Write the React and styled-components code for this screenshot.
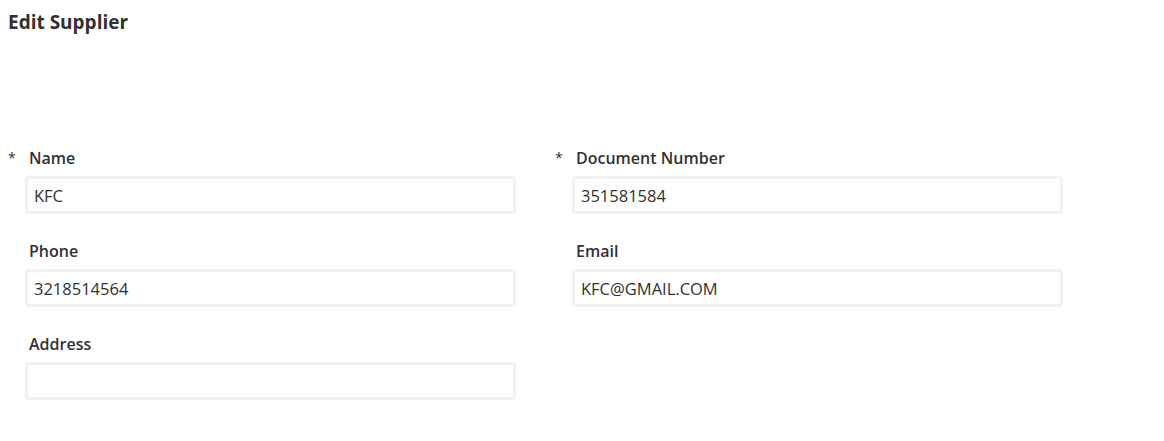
import styled, { createGlobalStyle } from 'styled-components';

const GlobalStyle = createGlobalStyle`
  body {
    margin: 8px;
    background: #ffffff;
    font-family: 'Open Sans', 'Noto Sans', sans-serif;
    color: #323130;
  }
`;

const Title = styled.h2`
  margin: 0;
  font-size: 19px;
  font-weight: 700;
  line-height: 28px;
  color: #323130;
`;

const Form = styled.div`
  margin-top: 112px;
  display: grid;
  grid-template-columns: 508px 508px;
  column-gap: 39px;
  row-gap: 27px;
`;

const Field = styled.div`
  display: flex;
  flex-direction: column;
  gap: 8px;
`;

const LabelRow = styled.div`
  display: flex;
  align-items: center;
  height: 20px;
`;

const Star = styled.span`
  width: 21px;
  font-size: 14px;
  line-height: 20px;
  visibility: ${(props) => (props.show ? 'visible' : 'hidden')};
`;

const Label = styled.label`
  font-size: 16px;
  font-weight: 600;
  line-height: 20px;
`;

const Input = styled.input`
  margin-left: 17px;
  width: 491px;
  height: 38px;
  box-sizing: border-box;
  border: 3px solid #f3f2f1;
  border-radius: 3px;
  padding: 0 6px;
  font-family: inherit;
  font-size: 16.5px;
  color: #323130;
  outline: none;
  background: #ffffff;
`;

const fields = [
  { label: 'Name', value: 'KFC', required: true },
  { label: 'Document Number', value: '351581584', required: true },
  { label: 'Phone', value: '3218514564' },
  { label: 'Email', value: 'KFC@GMAIL.COM' },
  { label: 'Address', value: '' },
];

export default function App() {
  return (
    <>
      <GlobalStyle />
      <Title>Edit Supplier</Title>
      <Form>
        {fields.map((f) => (
          <Field key={f.label}>
            <LabelRow>
              <Star show={f.required}>*</Star>
              <Label>{f.label}</Label>
            </LabelRow>
            <Input defaultValue={f.value} />
          </Field>
        ))}
      </Form>
    </>
  );
}
